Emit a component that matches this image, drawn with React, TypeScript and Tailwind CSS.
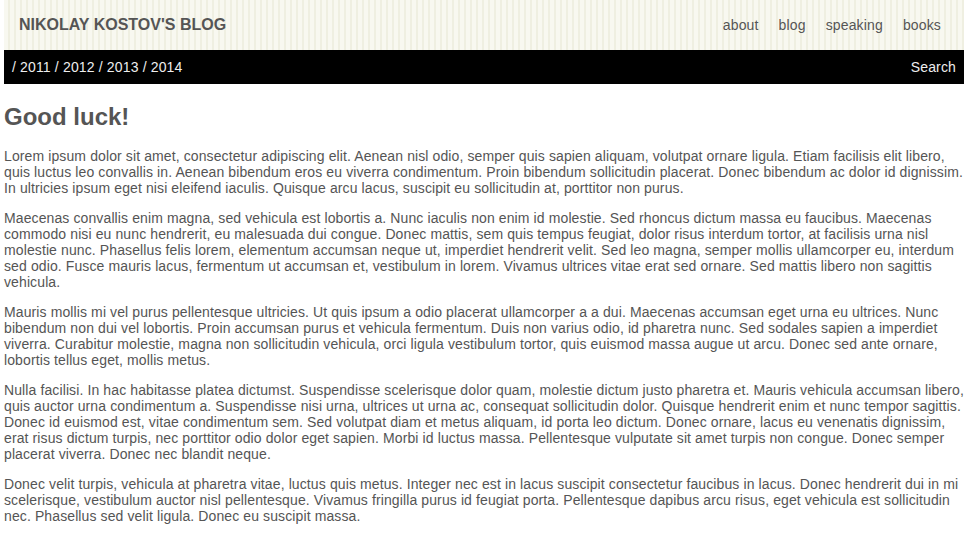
const paragraphs = [
  "Lorem ipsum dolor sit amet, consectetur adipiscing elit. Aenean nisl odio, semper quis sapien aliquam, volutpat ornare ligula. Etiam facilisis elit libero, quis luctus leo convallis in. Aenean bibendum eros eu viverra condimentum. Proin bibendum sollicitudin placerat. Donec bibendum ac dolor id dignissim. In ultricies ipsum eget nisi eleifend iaculis. Quisque arcu lacus, suscipit eu sollicitudin at, porttitor non purus.",
  "Maecenas convallis enim magna, sed vehicula est lobortis a. Nunc iaculis non enim id molestie. Sed rhoncus dictum massa eu faucibus. Maecenas commodo nisi eu nunc hendrerit, eu malesuada dui congue. Donec mattis, sem quis tempus feugiat, dolor risus interdum tortor, at facilisis urna nisl molestie nunc. Phasellus felis lorem, elementum accumsan neque ut, imperdiet hendrerit velit. Sed leo magna, semper mollis ullamcorper eu, interdum sed odio. Fusce mauris lacus, fermentum ut accumsan et, vestibulum in lorem. Vivamus ultrices vitae erat sed ornare. Sed mattis libero non sagittis vehicula.",
  "Mauris mollis mi vel purus pellentesque ultricies. Ut quis ipsum a odio placerat ullamcorper a a dui. Maecenas accumsan eget urna eu ultrices. Nunc bibendum non dui vel lobortis. Proin accumsan purus et vehicula fermentum. Duis non varius odio, id pharetra nunc. Sed sodales sapien a imperdiet viverra. Curabitur molestie, magna non sollicitudin vehicula, orci ligula vestibulum tortor, quis euismod massa augue ut arcu. Donec sed ante ornare, lobortis tellus eget, mollis metus.",
  "Nulla facilisi. In hac habitasse platea dictumst. Suspendisse scelerisque dolor quam, molestie dictum justo pharetra et. Mauris vehicula accumsan libero, quis auctor urna condimentum a. Suspendisse nisi urna, ultrices ut urna ac, consequat sollicitudin dolor. Quisque hendrerit enim et nunc tempor sagittis. Donec id euismod est, vitae condimentum sem. Sed volutpat diam et metus aliquam, id porta leo dictum. Donec ornare, lacus eu venenatis dignissim, erat risus dictum turpis, nec porttitor odio dolor eget sapien. Morbi id luctus massa. Pellentesque vulputate sit amet turpis non congue. Donec semper placerat viverra. Donec nec blandit neque.",
  "Donec velit turpis, vehicula at pharetra vitae, luctus quis metus. Integer nec est in lacus suscipit consectetur faucibus in lacus. Donec hendrerit dui in mi scelerisque, vestibulum auctor nisl pellentesque. Vivamus fringilla purus id feugiat porta. Pellentesque dapibus arcu risus, eget vehicula est sollicitudin nec. Phasellus sed velit ligula. Donec eu suscipit massa.",
];

const navLinks = ["about", "blog", "speaking", "books"];
const years = ["2011", "2012", "2013", "2014"];

export default function App() {
  return (
    <div className="min-h-screen bg-white font-['Liberation_Sans',Arial,sans-serif] text-[#555]">
      <div className="ml-1 w-[960px]">
        <header className="flex h-[50px] items-center justify-between bg-[repeating-linear-gradient(90deg,#f8f8f0_0px,#f8f8f0_4px,#efefe1_4px,#efefe1_6px)] pl-[15px] pr-[23px]">
          <a className="text-base font-bold text-[#555]">NIKOLAY KOSTOV&apos;S BLOG</a>
          <nav className="flex gap-[20px] text-[14px] tracking-[0.15px]">
            {navLinks.map((link) => (
              <a key={link} className="text-[#555]">
                {link}
              </a>
            ))}
          </nav>
        </header>

        <div className="flex h-[34px] items-center justify-between bg-black pl-[8px] pr-[8px] text-[14px] tracking-[0.15px] text-[#eee]">
          <div>
            {years.map((year) => (
              <span key={year}>
                / {year}{" "}
              </span>
            ))}
          </div>
          <span>Search</span>
        </div>

        <main className="pt-[20px]">
          <h1 className="mb-[18px] text-[24px] font-bold leading-[26px]">Good luck!</h1>
          {paragraphs.map((text, i) => (
            <p key={i} className="mb-[14px] text-[14px] leading-[16px] tracking-[0.11px]">
              {text}
            </p>
          ))}
        </main>
      </div>
    </div>
  );
}
